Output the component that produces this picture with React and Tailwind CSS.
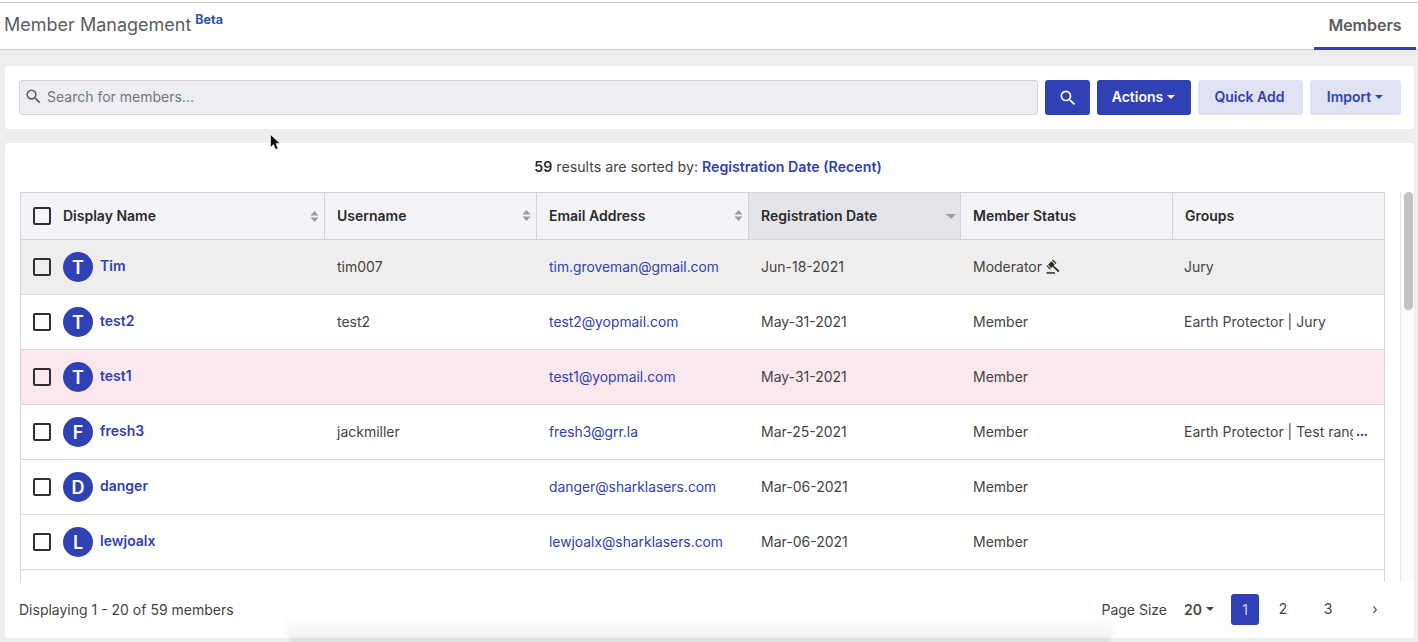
import { MdSearch } from 'react-icons/md';

const columns = 'grid grid-cols-[304px_212px_212px_212px_212px_211px]';

const members = [
  { initial: 'T', name: 'Tim', username: 'tim007', email: 'tim.groveman@gmail.com', date: 'Jun-18-2021', status: 'Moderator', groups: 'Jury', bg: 'bg-[#efeeed]' },
  { initial: 'T', name: 'test2', username: 'test2', email: 'test2@yopmail.com', date: 'May-31-2021', status: 'Member', groups: 'Earth Protector | Jury', bg: 'bg-white' },
  { initial: 'T', name: 'test1', username: '', email: 'test1@yopmail.com', date: 'May-31-2021', status: 'Member', groups: '', bg: 'bg-[#fae8ef]' },
  { initial: 'F', name: 'fresh3', username: 'jackmiller', email: 'fresh3@grr.la', date: 'Mar-25-2021', status: 'Member', groups: 'Earth Protector | Test rang', more: true, bg: 'bg-white' },
  { initial: 'D', name: 'danger', username: '', email: 'danger@sharklasers.com', date: 'Mar-06-2021', status: 'Member', groups: '', bg: 'bg-white' },
  { initial: 'L', name: 'lewjoalx', username: '', email: 'lewjoalx@sharklasers.com', date: 'Mar-06-2021', status: 'Member', groups: '', bg: 'bg-white' },
];

const Caret = ({ className }) => (
  <svg viewBox="0 0 8 4" className={className}>
    <path d="M0 0h8L4 4z" fill="currentColor" />
  </svg>
);

const SortArrows = () => (
  <svg viewBox="0 0 10 12" className="h-[11px] w-[9px] text-[#9a9aa0]">
    <path d="M5 0l4.500 5H.5zM5 12L.5 7h9z" fill="currentColor" />
  </svg>
);

const Gavel = () => (
  <svg viewBox="0 0 14 15" className="ml-[4px] mt-[1px] h-[15px] w-[14px] text-[#2b2b2b]">
    <path d="M7 .5l3.500 3.500-.9.9L6.100 1.400zM5.500 2.300l3.200 3.200-3.400 3.400-3.200-3.200zM1.300 6.200l3.500 3.500-.9.9L.4 7.100z" fill="currentColor" />
    <path d="M7.600 6.600l5.800 5.200-1.300 1.400-5.500-5.600z" fill="currentColor" />
    <rect x="0.500" y="13.200" width="8.500" height="1.500" fill="currentColor" />
  </svg>
);

const Checkbox = () => (
  <span className="h-[18px] w-[18px] shrink-0 rounded-[2px] border-2 border-[#2f2f2f] bg-transparent" />
);

const HeaderCell = ({ label, sort, active }) => (
  <div className={`flex items-center justify-between border-r border-[#d5d5d8] pb-[2px] pl-3 pr-[5px] last:border-r-0 ${active ? 'bg-[#e3e4ea]' : ''}`}>
    <span className="text-[14px] font-semibold text-[#2b2b2b]">{label}</span>
    {sort && <SortArrows />}
    {active && <Caret className="-mr-[1px] mt-[2px] h-[5px] w-[10px] text-[#9a9aa0]" />}
  </div>
);

const Row = ({ member }) => (
  <div className={`${columns} h-[55px] border-b border-[#d9d9d9] text-[14px] text-[#444444] ${member.bg}`}>
    <div className="flex items-center pl-3">
      <Checkbox />
      <span className="ml-[12px] flex h-[30px] w-[30px] items-center justify-center rounded-full bg-[#3040b5] text-[18px] font-semibold text-white">
        {member.initial}
      </span>
      <span className="mb-[3px] ml-[7px] font-semibold text-[#3040b5]">{member.name}</span>
    </div>
    <div className="flex items-center pb-[2px] pl-3">{member.username}</div>
    <div className="flex items-center pl-3 text-[13.85px] text-[#3040b5]">{member.email}</div>
    <div className="flex items-center pb-[2px] pl-3">{member.date}</div>
    <div className="flex items-center pb-[2px] pl-3">
      {member.status}
      {member.status === 'Moderator' && <Gavel />}
    </div>
    <div className="flex items-center pb-[2px] pl-[11px]">
      <span className="w-[169px] overflow-hidden whitespace-nowrap">{member.groups}</span>
      {member.more && <span className="ml-[3px] font-['Liberation_Sans',sans-serif] text-[14px] font-bold text-[#3040b5]">...</span>}
    </div>
  </div>
);

const PageButton = ({ children, active, className }) => (
  <span className={`flex h-[31px] w-[28px] items-center justify-center rounded-[3px] text-[14px] ${active ? 'bg-[#3040b5] text-[#d5d9f5]' : 'pb-[2px] text-[#444444]'} ${className}`}>
    {children}
  </span>
);

const App = () => {
  return (
    <div className="relative h-[642px] w-[1418px] overflow-hidden bg-[#efeeed] font-['Inter',sans-serif]">
      <div className="h-[2px] bg-white" />
      <header className="flex h-[48px] items-end justify-between border-y border-t-[#d0d0d0] border-b-[#cfcfd2] bg-white">
        <div className="mb-[13px] ml-1 flex items-start">
          <h1 className="text-[18px] leading-[22px] text-[#5d5d5d]">Member Management</h1>
          <sup className="ml-1 mt-[12px] text-[12.500px] font-bold text-[#2a57a8]">Beta</sup>
        </div>
        <div className="-mb-[1px] mr-[2px] flex h-[47px] w-[102px] items-center justify-center border-b-[3px] border-[#3040b5] text-[16px] font-semibold text-[#5d5d5d]">
          Members
        </div>
      </header>

      <section className="mx-[5px] mt-4 flex h-[63px] w-[1409px] items-center rounded-[3px] bg-white pl-[14px]">
        <div className="flex h-[35px] w-[1019px] shrink-0 items-center rounded-[3px] border border-[#d2d4d8] bg-[#eceef2] pl-[4px] text-[14px] text-[#75757a]">
          <MdSearch size={19} className="mb-[2px] text-[#5f5f63]" />
          <span className="mb-[3px] ml-[4px]">Search for members...</span>
        </div>
        <button className="ml-[7px] flex h-[35px] w-[45px] shrink-0 items-center justify-center rounded-[3px] bg-[#3040b5] text-white">
          <MdSearch size={20} />
        </button>
        <button className="ml-[7px] flex h-[35px] w-[94px] shrink-0 items-center justify-center rounded-[3px] bg-[#3040b5] pb-[2px] pr-[1px] text-[14px] font-semibold text-white">
          Actions
          <Caret className="ml-1 h-[4px] w-[8px]" />
        </button>
        <button className="ml-[7px] h-[35px] w-[105px] shrink-0 rounded-[3px] bg-[#e0e2f2] pb-[2px] pr-[2px] text-[14px] font-semibold text-[#3040b5]">
          Quick Add
        </button>
        <button className="ml-[7px] flex h-[35px] w-[91px] shrink-0 items-center justify-center rounded-[3px] bg-[#e0e2f2] pb-[2px] pr-[1px] text-[14px] font-semibold text-[#3040b5]">
          Import
          <Caret className="ml-1 h-[4px] w-[8px]" />
        </button>
      </section>

      <section className="mx-[5px] mt-[14px] h-[495px] w-[1409px] rounded-[3px] bg-white">
        <p className="flex h-[49px] items-center justify-center pb-[2px] pr-[3px] text-[14.200px] text-[#444444]">
          <b className="mr-1 font-semibold text-[#2b2b2b]">59</b> results are sorted by:
          <b className="ml-1 font-semibold text-[#3040b5]">Registration Date (Recent)</b>
        </p>
        <div className="flex h-[390px]">
          <div className="ml-[15px] h-full w-[1365px] overflow-hidden border-x border-t border-[#d5d5d8]">
            <div className={`${columns} h-[47px] border-b border-[#d5d5d8] bg-[#f3f3f8]`}>
              <div className="flex items-center justify-between border-r border-[#d5d5d8] pl-3 pr-[5px]">
                <div className="flex items-center">
                  <Checkbox />
                  <span className="mb-[2px] ml-[12px] text-[14px] font-semibold text-[#2b2b2b]">Display Name</span>
                </div>
                <SortArrows />
              </div>
              <HeaderCell label="Username" sort />
              <HeaderCell label="Email Address" sort />
              <HeaderCell label="Registration Date" active />
              <HeaderCell label="Member Status" />
              <HeaderCell label="Groups" />
            </div>
            {members.map((member) => (
              <Row key={member.email} member={member} />
            ))}
          </div>
          <div className="ml-[15px] h-full w-[14px] border-l border-[#e5e5ea] bg-[#fafafb] pl-[3px]">
            <div className="h-[118px] w-[9px] rounded-full bg-[#c2c2c2]" />
          </div>
        </div>
        <footer className="flex h-[56px] items-center justify-between pb-[2px] pl-[14px] pr-[25px] text-[14px] text-[#444444]">
          <span>Displaying 1 - 20 of 59 members</span>
          <div className="flex items-center">
            <span>Page Size</span>
            <span className="ml-[17px] flex items-center font-semibold">
              20
              <Caret className="ml-[4px] h-[4px] w-[8px]" />
            </span>
            <PageButton active className="ml-[17px]">1</PageButton>
            <PageButton className="ml-[10px]">2</PageButton>
            <PageButton className="ml-[17px]">3</PageButton>
            <PageButton className="ml-[19px]">›</PageButton>
          </div>
        </footer>
      </section>

      {/* cursor and the smear left along the bottom edge of the capture */}
      <svg viewBox="0 0 12 18" className="absolute left-[270px] top-[134px] h-[18px] w-[12px]">
        <path d="M.5.5v13l3-3 2 5 2.500-1-2-5h4z" fill="#111111" stroke="#ffffff" strokeWidth=".6" />
      </svg>
      <div className="absolute bottom-[4px] left-[285px] h-[22px] w-[830px] bg-gradient-to-b from-transparent to-[#f0f0f0] blur-[3px]" />
      <div className="absolute bottom-0 left-[290px] h-[4px] w-[820px] bg-[#dddddd] blur-[1px]" />
    </div>
  );
};

export default App;
